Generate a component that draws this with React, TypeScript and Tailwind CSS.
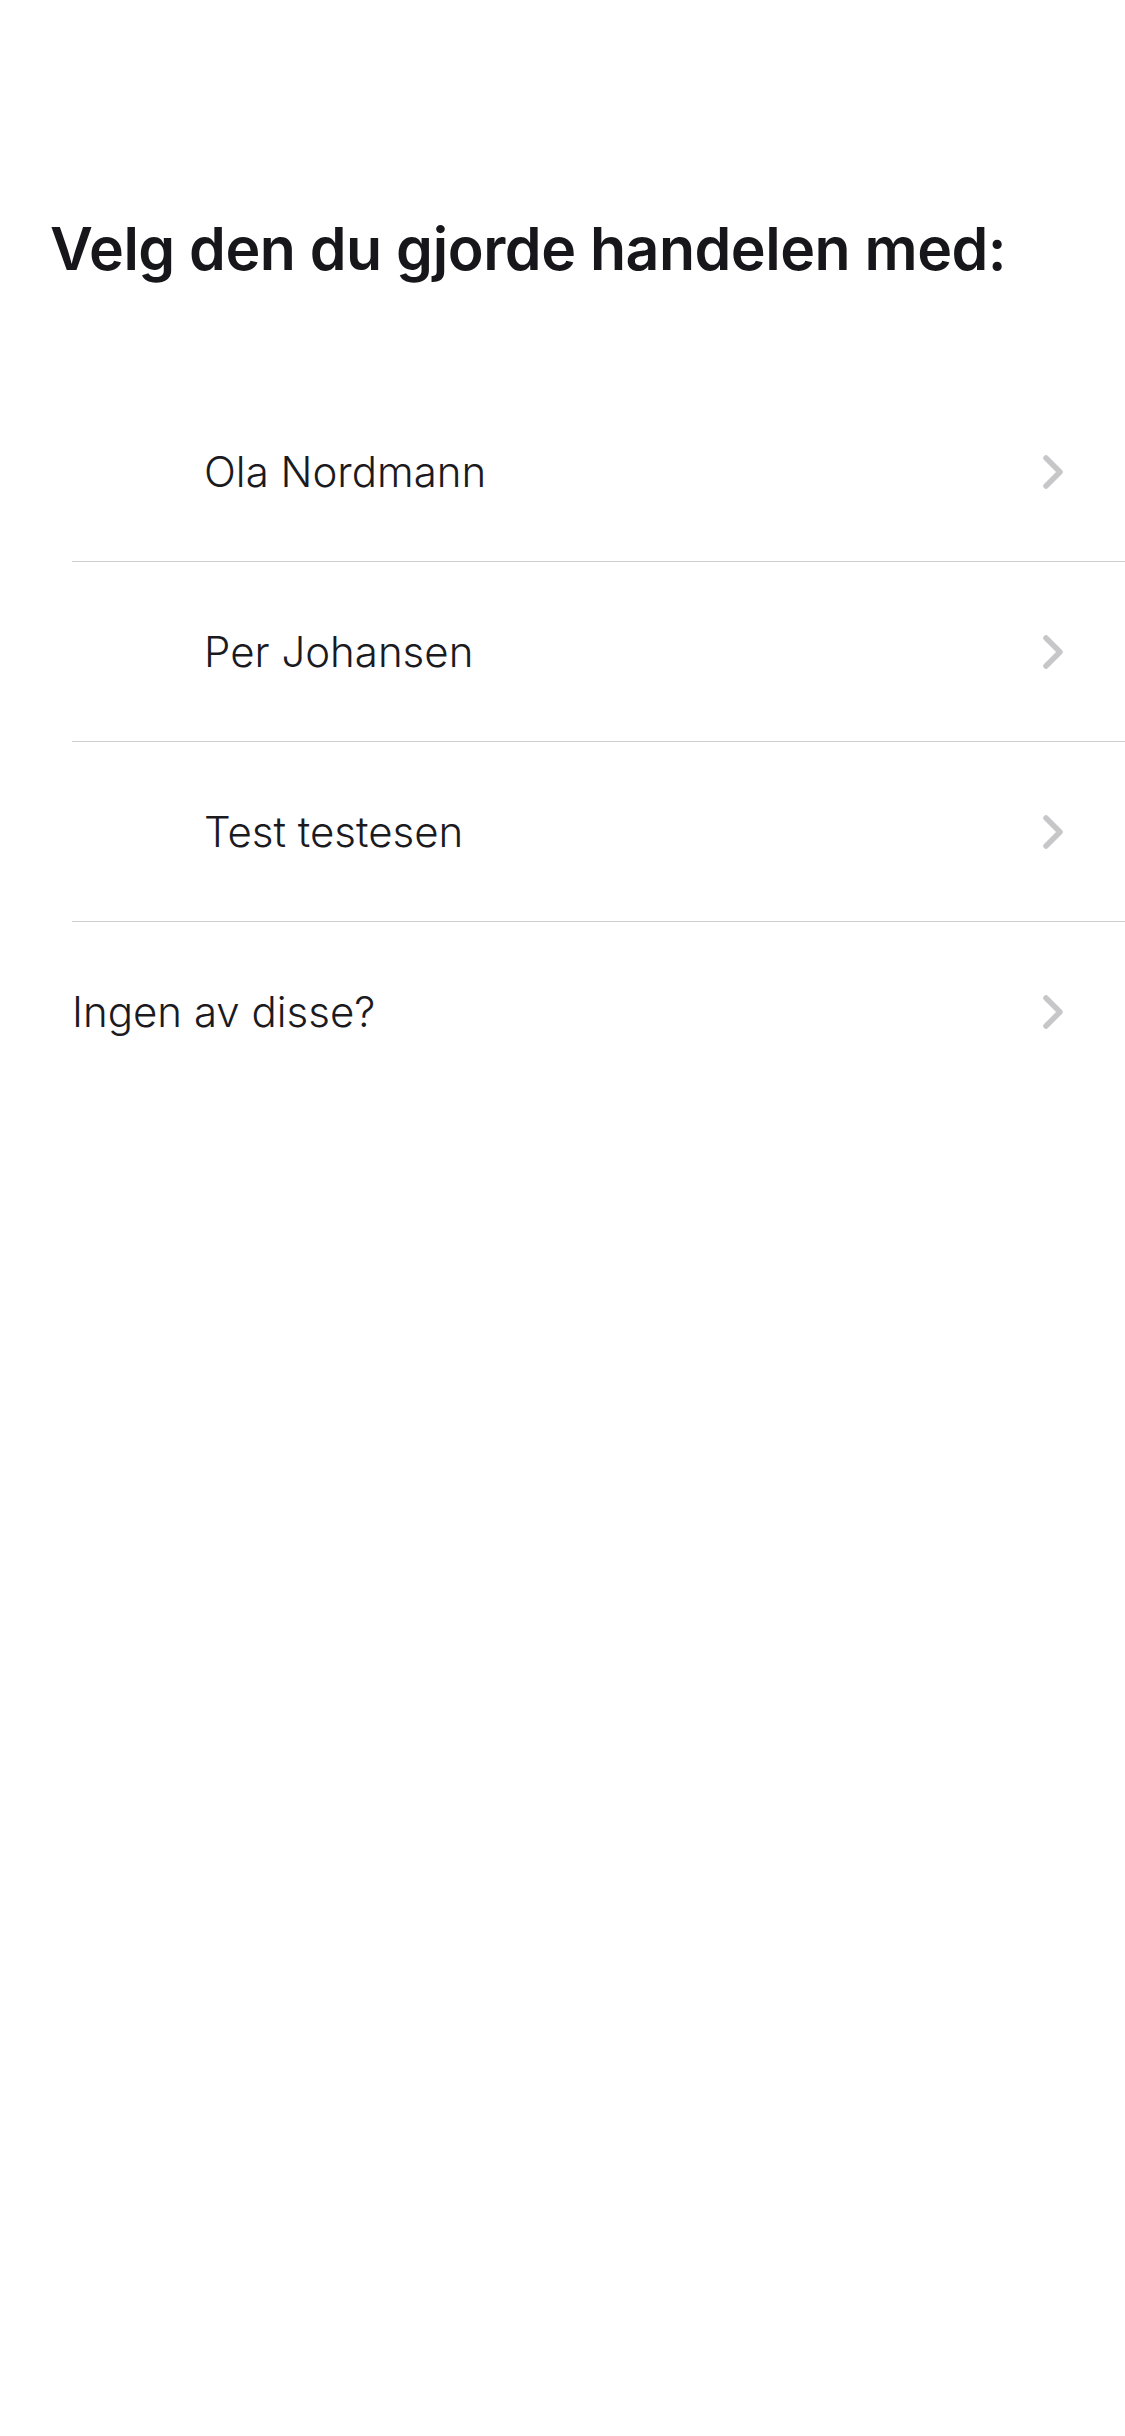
import React from 'react';

const Chevron = () => (
  <svg width="24" height="36" viewBox="0 0 24 36" fill="none" className="shrink-0">
    <path d="M5 4 L19 18 L5 32" stroke="#c7c7c9" strokeWidth="5.5" strokeLinecap="round" strokeLinejoin="round" />
  </svg>
);

const PersonRow = ({ name, indent }: { name: string; indent: boolean }) => (
  <div className="flex h-[179px] items-center justify-between pr-[60px]">
    <div className={indent ? 'pl-[132px]' : ''}>
      <span className="text-[42px] font-light text-[#1b1b1f]">{name}</span>
    </div>
    <Chevron />
  </div>
);

const App = () => {
  const people = ['Ola Nordmann', 'Per Johansen', 'Test testesen'];

  return (
    <div className="min-h-[2436px] w-full bg-white" style={{ fontFamily: 'Inter, "Noto Sans", sans-serif' }}>
      <div className="pt-[205px] pl-[50px]">
        <h1 className="text-[59px] font-semibold leading-[88px] tracking-[-0.5px] text-[#17171b]">
          Velg den du gjorde handelen med:
        </h1>
      </div>

      <div className="mt-[89px] pl-[72px]">
        {people.map((p) => (
          <div key={p} className="border-b border-[#cfcfd1]">
            <PersonRow name={p} indent />
          </div>
        ))}
        <PersonRow name="Ingen av disse?" indent={false} />
      </div>
    </div>
  );
};

export default App;
